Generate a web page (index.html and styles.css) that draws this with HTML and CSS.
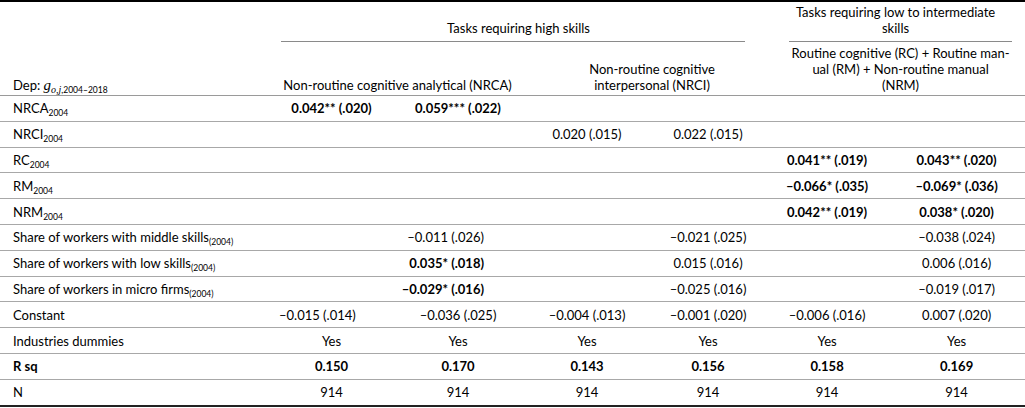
FILE: index.html
```html
<!DOCTYPE html>
<html>
<head>
<meta charset="utf-8">
<link rel="stylesheet" href="styles.css">
</head>
<body>
<table class="reg">
  <colgroup>
    <col class="c-label">
    <col class="c1"><col class="c2"><col class="c3"><col class="c4"><col class="c5"><col class="c6">
  </colgroup>
  <thead>
    <tr class="h1">
      <th class="lab"></th>
      <th colspan="4" class="grp"><div class="grp-text">Tasks requiring high skills</div><div class="rule rule-high"></div></th>
      <th colspan="2" class="grp"><div class="grp-text">Tasks requiring low to intermediate<br>skills</div><div class="rule rule-low"></div></th>
    </tr>
    <tr class="h2">
      <th class="lab">Dep: <span class="g">g</span><sub><i>o,j</i>,2004–2018</sub></th>
      <th colspan="2">Non-routine cognitive analytical (NRCA)</th>
      <th colspan="2" class="nrci">Non-routine cognitive<br>interpersonal (NRCI)</th>
      <th colspan="2" class="rc">Routine cognitive (RC) + Routine man-<br>ual (RM) + Non-routine manual<br>(NRM)</th>
    </tr>
  </thead>
  <tbody>
    <tr><td class="lab">NRCA<sub>2004</sub></td><td class="b">0.042** (.020)</td><td class="b">0.059*** (.022)</td><td></td><td></td><td></td><td></td></tr>
    <tr><td class="lab">NRCI<sub>2004</sub></td><td></td><td></td><td>0.020 (.015)</td><td>0.022 (.015)</td><td></td><td></td></tr>
    <tr><td class="lab">RC<sub>2004</sub></td><td></td><td></td><td></td><td></td><td class="b">0.041** (.019)</td><td class="b">0.043** (.020)</td></tr>
    <tr><td class="lab">RM<sub>2004</sub></td><td></td><td></td><td></td><td></td><td class="b">–0.066* (.035)</td><td class="b">–0.069* (.036)</td></tr>
    <tr><td class="lab">NRM<sub>2004</sub></td><td></td><td></td><td></td><td></td><td class="b">0.042** (.019)</td><td class="b">0.038* (.020)</td></tr>
    <tr><td class="lab">Share of workers with middle skills<sub>(2004)</sub></td><td></td><td class="r">–0.011 (.026)</td><td></td><td>–0.021 (.025)</td><td></td><td>–0.038 (.024)</td></tr>
    <tr><td class="lab">Share of workers with low skills<sub>(2004)</sub></td><td></td><td class="b r">0.035* (.018)</td><td></td><td>0.015 (.016)</td><td></td><td>0.006 (.016)</td></tr>
    <tr><td class="lab">Share of workers in micro firms<sub>(2004)</sub></td><td></td><td class="b r">–0.029* (.016)</td><td></td><td>–0.025 (.016)</td><td></td><td>–0.019 (.017)</td></tr>
    <tr><td class="lab">Constant</td><td class="l1">–0.015 (.014)</td><td>–0.036 (.025)</td><td>–0.004 (.013)</td><td>–0.001 (.020)</td><td>–0.006 (.016)</td><td>0.007 (.020)</td></tr>
    <tr><td class="lab">Industries dummies</td><td>Yes</td><td>Yes</td><td>Yes</td><td>Yes</td><td>Yes</td><td>Yes</td></tr>
    <tr class="bold-row"><td class="lab">R sq</td><td>0.150</td><td>0.170</td><td>0.143</td><td>0.156</td><td>0.158</td><td>0.169</td></tr>
    <tr class="last"><td class="lab">N</td><td>914</td><td>914</td><td>914</td><td>914</td><td>914</td><td>914</td></tr>
  </tbody>
</table>
</body>
</html>
```
FILE: styles.css
```css
html, body {
  margin: 0;
  padding: 0;
  background: #fff;
}
body {
  font-family: "Lato", "Open Sans", "Liberation Sans", sans-serif;
  font-size: 13px;
  color: #000;
}
.reg {
  width: 1025px;
  border-collapse: collapse;
  table-layout: fixed;
  border-top: 2px solid #000;
}
.c-label { width: 271px; }
.c1 { width: 121px; }
.c2 { width: 132px; }
.c3 { width: 126px; }
.c4 { width: 116px; }
.c5 { width: 122px; }
.c6 { width: 137px; }

th {
  font-weight: normal;
  text-align: center;
  line-height: 16px;
  padding: 0;
}
.h1 th {
  height: 40px;
  vertical-align: bottom;
}
.grp-text {
  padding-bottom: 5px;
}
.rule {
  height: 1px;
  background: #8a8a8a;
}
.rule-high { margin: 0 21px 0 10px; }
.rule-low { margin: 0 13px 0 23px; }

.h2 th {
  height: 51px;
  vertical-align: bottom;
  padding-bottom: 2px;
  border-bottom: 1px solid #9a9a9a;
}
.h2 th.lab, .h1 th.lab {
  text-align: left;
  padding-left: 13px;
}
.h2 th.nrci { padding-left: 14px; }
.h2 th.rc { padding-left: 10px; }
.g {
  font-family: "Liberation Serif", serif;
  font-style: italic;
  font-size: 15px;
}
sub {
  font-size: 8.5px;
  vertical-align: -3px;
  line-height: 0;
}
sub i {
  font-family: "Liberation Serif", serif;
  font-size: 10px;
}

td {
  height: 24.8px;
  padding: 0;
  text-align: center;
  vertical-align: middle;
  border-bottom: 1px solid #a8a8a8;
  white-space: nowrap;
}
td.lab {
  text-align: left;
  padding-left: 13px;
}
td.b, .bold-row td { font-weight: bold; }
td.r { text-align: right; padding-right: 40px; }
td.l1 { text-align: left; padding-left: 8px; }
.last td { border-bottom: 2px solid #222; }
```
